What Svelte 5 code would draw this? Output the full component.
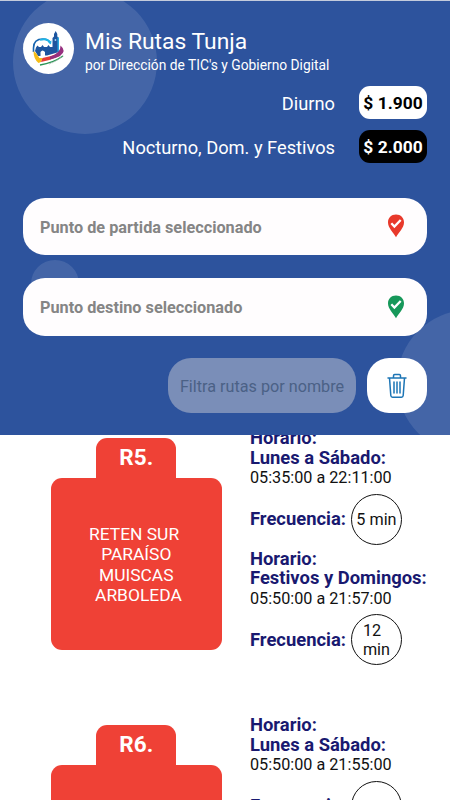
<script>
  const routes = [
    {
      id: 'R5.',
      stops: ['RETEN SUR ', 'PARAÍSO', 'MUISCAS', ' ARBOLEDA'],
      schedules: [
        { days: 'Lunes a Sábado:', hours: '05:35:00 a 22:11:00', every: '5 min' },
        { days: 'Festivos y Domingos:', hours: '05:50:00 a 21:57:00', every: '12 min' }
      ]
    },
    {
      id: 'R6.',
      stops: [],
      schedules: [{ days: 'Lunes a Sábado:', hours: '05:50:00 a 21:55:00', every: '7 min' }]
    }
  ];
  const points = [
    { label: 'Punto de partida seleccionado', color: '#e8392b' },
    { label: 'Punto destino seleccionado', color: '#17985a' }
  ];
</script>

<div class="screen">
  <header>
    <i class="bubble one"></i>
    <i class="bubble two"></i>
    <i class="bubble three"></i>
    <div class="brand">
      <div class="logo">
        <svg width="50" height="50" viewBox="0 0 50 50">
          <path d="M10.500 29 V25 Q10.500 16 20 16 Q25 16 27.500 20" fill="none" stroke="#1765b0" stroke-width="1.600" />
          <path d="M17 17 Q24 14.500 27.500 20" fill="none" stroke="#20b4e6" stroke-width="1.800" />
          <path d="M25 19 L28 21.500 L28.500 17.500Z" fill="#20b4e6" />
          <path d="M13 24.500 L14.500 22.500 L16 24 H18 L19.500 22 L21 24 H24 L25.500 22 L27 24 H29.500 V15 L31 13.500 V11 L32.700 8 L34.300 11 V13.500 L36 15 V29 L24 32.500 H22 V29 Q19.500 26 17.500 29 V33 H15 L12 28Z" fill="#1d559f" />
          <path d="M34.500 14 L36 15 V28.500 L34.500 29Z" fill="#28a7df" />
          <path d="M31.700 16 h1.500 v2 h-1.500Z" fill="#9acbec" />
          <path d="M10.500 28 L13 30 L16.500 35 H19.500 L18 39 L15.500 40 Q10.500 36 10.500 28Z" fill="#f5bd18" />
          <path d="M19.500 35 Q28 33.500 35 30.500 L36.500 33 Q28 37 18 39Z" fill="#e63c36" />
          <path d="M27 33.500 Q38 30 37.500 22.500 Q44 28 37 33 Q32 35.500 27 36.500Z" fill="#96307f" />
          <path d="M17 42 Q30 40 40 33" fill="none" stroke="#289454" stroke-width="1.500" />
          <path d="M26 41 Q34 38.500 41 31.500" fill="none" stroke="#a9b6ae" stroke-width=".8" stroke-dasharray="2 1" />
        </svg>
      </div>
      <div class="names">
        <h1>Mis Rutas Tunja</h1>
        <p>por Dirección de TIC's y Gobierno Digital</p>
      </div>
    </div>
    <div class="fare"><span>Diurno</span><b>$ 1.900</b></div>
    <div class="fare night"><span>Nocturno, Dom. y Festivos</span><b>$ 2.000</b></div>
    <div class="points">
      {#each points as point}
        <div class="point">
          <span>{point.label}</span>
          <svg width="18" height="24" viewBox="0 0 18 24">
            <path d="M9 .5 C4.200 .5 1 4 1 8.500 C1 14 6.500 18.500 9 23.300 C11.500 18.500 17 14 17 8.500 C17 4 13.800 .5 9 .5Z" fill={point.color} />
            <path d="M4.300 9.300 L7.400 12.500 L13.700 6" fill="none" stroke="#fff" stroke-width="2.300" />
          </svg>
        </div>
      {/each}
    </div>
    <div class="actions">
      <input placeholder="Filtra rutas por nombre" aria-label="Filtra rutas por nombre" />
      <button aria-label="Borrar">
        <svg width="20" height="26" viewBox="0 0 20 26" fill="none" stroke="#1c75b5" stroke-width="1.500" stroke-linecap="round" stroke-linejoin="round">
          <path d="M1 5 H19 M6.500 4.500 V2.700 Q6.500 1.500 7.700 1.500 H12.300 Q13.500 1.500 13.500 2.700 V4.500 M2.500 5 L3.800 22.500 Q4 24.300 5.500 24.300 H14.500 Q16 24.300 16.200 22.500 L17.500 5 M7 9 V20 M10 9 V20 M13 9 V20" />
        </svg>
      </button>
    </div>
  </header>

  <main>
    {#each routes as route}
      <article>
        <div class="card">
          <div class="tab">{route.id}</div>
          <div class="stops">
            {#each route.stops as stop}<div>{stop}</div>{/each}
          </div>
        </div>
        <div class="times">
          {#each route.schedules as s}
            <section>
              <strong>Horario:</strong>
              <strong>{s.days}</strong>
              <span class="hours">{s.hours}</span>
              <div class="freq"><strong>Frecuencia:</strong><div class="ring"><span>{s.every}</span></div></div>
            </section>
          {/each}
        </div>
      </article>
    {/each}
  </main>
</div>

<style>
  :global(body) { margin: 0; }
  .screen {
    width: 450px; height: 800px; overflow: hidden; background: #fff;
    display: flex; flex-direction: column;
    font-family: Roboto, "Liberation Sans", sans-serif;
  }
  header {
    position: relative; z-index: 1; overflow: hidden; box-sizing: border-box; flex: none;
    height: 435px; padding: 22px 23px 0; background: #2d539d; border-top: 1px solid #c3cbdc; color: #fff;
  }
  .bubble { position: absolute; border-radius: 50%; background: rgba(255, 255, 255, .11); }
  .one { width: 144px; height: 144px; left: 13px; top: -11px; }
  .two { width: 48px; height: 48px; left: 31px; top: 259px; }
  .three { width: 144px; height: 144px; left: 397px; top: 309px; }
  .brand, .fare, .points, .actions { position: relative; }
  .brand { display: flex; height: 51px; }
  .logo { width: 51px; height: 51px; border-radius: 50%; background: #fff; flex: none; }
  .logo svg { display: block; }
  .names { margin-left: 11px; }
  h1 { margin: 5px 0 0; font-size: 22.850px; line-height: 28px; font-weight: 400; }
  p { margin: 0; font-size: 13.800px; line-height: 18px; white-space: nowrap; }
  .fare { display: flex; justify-content: flex-end; align-items: center; height: 33px; margin-top: 12px; font-size: 18.250px; }
  .fare span { margin-right: 24px; padding-top: 1px; }
  .fare b {
    width: 68px; height: 33px; line-height: 35px; border-radius: 11px; text-align: center;
    background: #fff; color: #000; font-size: 17.400px; font-weight: 700;
  }
  .fare.night { margin-top: 11px; }
  .night b { background: #000; color: #fff; }
  .points { margin-top: 34.500px; display: flex; flex-direction: column; gap: 23px; }
  .point {
    box-sizing: border-box; height: 57.500px; padding: 0 22px 0 17px; border-radius: 22px; background: #fffdfe;
    display: flex; align-items: center; justify-content: space-between;
    color: #858585; font-size: 16.250px; font-weight: 700;
  }
  .point span { padding-top: 2px; }
  .actions { display: flex; justify-content: flex-end; gap: 11px; margin-top: 22.500px; }
  input {
    box-sizing: border-box; width: 188px; height: 55px; border: 0; border-radius: 23px; padding: 2px 0 0;
    background: #7a8eb8; text-align: center; font-family: inherit; font-size: 16.200px;
  }
  input::placeholder { color: #4b6186; opacity: 1; }
  button {
    width: 60px; height: 55px; padding: 0; border: 0; border-radius: 22px; background: #fff;
    display: flex; align-items: center; justify-content: center;
  }
  main { margin-top: -7px; }
  article { display: flex; height: 287px; padding-left: 50.500px; }
  .card { width: 171.500px; margin-top: 10px; flex: none; }
  .tab {
    width: 80px; height: 40px; margin: 0 auto; border-radius: 11px 11px 0 0; background: #ef4136;
    color: #fff; font-size: 22.500px; font-weight: 700; line-height: 38px; text-align: center;
  }
  .stops {
    box-sizing: border-box; padding-top: 2px;
    height: 171.500px; border-radius: 11px; background: #ef4136; color: #fff; white-space: pre;
    display: flex; flex-direction: column; align-items: center; justify-content: center;
    font-size: 17.400px; line-height: 20.300px;
  }
  .times { margin-left: 28px; }
  section { height: 120.500px; white-space: nowrap; }
  strong { display: block; color: #191970; font-size: 18.400px; line-height: 19.600px; }
  .hours { display: block; padding-top: 1px; color: #111; font-size: 16.200px; line-height: 20px; }
  .freq { display: flex; align-items: center; margin-top: 5.500px; gap: 5px; }
  .ring {
    box-sizing: border-box; width: 51px; height: 51px; border: 1.300px solid #111; border-radius: 50%;
    display: flex; align-items: center; justify-content: center; white-space: normal;
    font-size: 16.200px; line-height: 19px; color: #111;
  }
  .ring span { max-width: 41px; }
  section:nth-child(2) .ring span { width: min-content; }
</style>
